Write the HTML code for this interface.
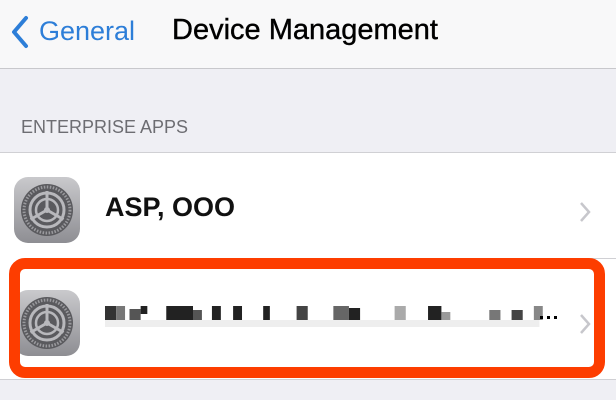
<!DOCTYPE html>
<html><head><meta charset="utf-8"><style>
body{margin:0;width:616px;height:400px;overflow:hidden;background:#efeff4;font-family:"Liberation Sans",sans-serif;position:relative}
.nav{position:absolute;left:0;top:0;width:616px;height:68px;background:#f8f8f9;border-bottom:1px solid #c8c8cc}
.abs{position:absolute;white-space:nowrap}
.rows{position:absolute;left:0;top:152px;width:616px;height:226px;background:#fff;border-top:1px solid #d0d0d4;border-bottom:1px solid #d0d0d4}
.red{position:absolute;left:9px;top:258px;width:574px;height:98px;border:11px solid #fd3d00;border-radius:16px}
</style></head><body>
<div class="nav">
<svg class="abs" style="left:10px;top:15px" width="20" height="34" viewBox="0 0 20 34"><path d="M16 3 L4 17 L16 31" fill="none" stroke="#2d7ed8" stroke-width="4" stroke-linecap="round" stroke-linejoin="round"/></svg>
<div class="abs" style="left:39px;top:16px;font-size:27px;color:#2d7ed8">General</div>
<div class="abs" style="left:172px;top:14px;font-size:29px;color:#000;-webkit-text-stroke:0.4px #000">Device Management</div>
</div>
<div class="abs" style="left:21px;top:117px;font-size:18px;color:#6d6d72">ENTERPRISE APPS</div>
<div class="rows"></div>
<div class="abs" style="left:105px;top:258px;width:511px;height:1px;background:#d0d0d4"></div>
<svg class="abs" style="left:14px;top:177px" width="66" height="66" viewBox="0 0 66 66">
<defs><linearGradient id="g" x1="0" y1="0" x2="0" y2="1"><stop offset="0" stop-color="#c9c9cc"/><stop offset="1" stop-color="#8e8e93"/></linearGradient></defs>
<rect width="66" height="66" rx="14" fill="url(#g)"/>
<circle cx="33" cy="33" r="26" fill="#5a5a5e"/>
<circle cx="33" cy="33" r="23" fill="none" stroke="#9a9a9e" stroke-width="3" stroke-dasharray="1.5 1.5"/>
<circle cx="33" cy="33" r="17" fill="none" stroke="#b8b8bc" stroke-width="3"/>
<circle cx="33" cy="33" r="11" fill="none" stroke="#b8b8bc" stroke-width="2.5"/>
<path d="M33 33 L33 14 M33 33 L16.5 42.5 M33 33 L49.5 42.5" stroke="#b8b8bc" stroke-width="3"/>
<circle cx="33" cy="33" r="3" fill="#b8b8bc"/>
</svg>
<div class="abs" style="left:105px;top:192px;font-size:27px;font-weight:bold;color:#111">ASP, OOO</div>
<svg class="abs" style="left:578px;top:200px" width="14" height="24"><path d="M3 3 L11 12 L3 21" fill="none" stroke="#c7c7cc" stroke-width="2.5"/></svg>
<svg class="abs" style="left:14px;top:290px" width="66" height="66" viewBox="0 0 66 66">
<rect width="66" height="66" rx="14" fill="url(#g)"/>
<circle cx="33" cy="33" r="26" fill="#5a5a5e"/>
<circle cx="33" cy="33" r="23" fill="none" stroke="#9a9a9e" stroke-width="3" stroke-dasharray="1.5 1.5"/>
<circle cx="33" cy="33" r="17" fill="none" stroke="#b8b8bc" stroke-width="3"/>
<circle cx="33" cy="33" r="11" fill="none" stroke="#b8b8bc" stroke-width="2.5"/>
<path d="M33 33 L33 14 M33 33 L16.5 42.5 M33 33 L49.5 42.5" stroke="#b8b8bc" stroke-width="3"/>
<circle cx="33" cy="33" r="3" fill="#b8b8bc"/>
</svg>
<svg class="abs" style="left:578px;top:312px" width="14" height="24"><path d="M3 3 L11 12 L3 21" fill="none" stroke="#c7c7cc" stroke-width="2.5"/></svg>
<svg class="abs" style="left:105px;top:306px" width="440" height="26" viewBox="0 0 395 26" preserveAspectRatio="none">
<g fill="#222">
<rect x="0" y="0" width="10" height="14" fill="#333"/><rect x="10" y="0" width="8" height="14" fill="#777"/>
<rect x="22" y="3" width="10" height="11" fill="#555"/><rect x="32" y="0" width="6" height="8"/>
<rect x="55" y="0" width="24" height="14"/><rect x="79" y="4" width="8" height="10" fill="#555"/>
<rect x="96" y="0" width="8" height="14"/><rect x="115" y="0" width="8" height="14"/>
<rect x="142" y="0" width="6" height="14"/><rect x="172" y="0" width="10" height="14" fill="#444"/>
<rect x="205" y="0" width="14" height="14" fill="#666"/><rect x="219" y="2" width="10" height="12"/>
<rect x="260" y="0" width="10" height="14" fill="#aaa"/><rect x="290" y="0" width="12" height="14"/>
<rect x="302" y="6" width="8" height="8" fill="#999"/><rect x="345" y="4" width="10" height="10" fill="#777"/>
<rect x="365" y="4" width="10" height="10" fill="#444"/><rect x="385" y="0" width="8" height="14" fill="#888"/>
<rect x="0" y="14" width="390" height="7" fill="#eee"/>
</g></svg>
<div class="abs" style="left:540px;top:316px;width:30px;height:4px">
<span class="abs" style="left:0;width:3px;height:3px;background:#000"></span><span class="abs" style="left:7px;width:3px;height:3px;background:#000"></span><span class="abs" style="left:14px;width:3px;height:3px;background:#000"></span>
</div>
<div class="red"></div>
</body></html>
